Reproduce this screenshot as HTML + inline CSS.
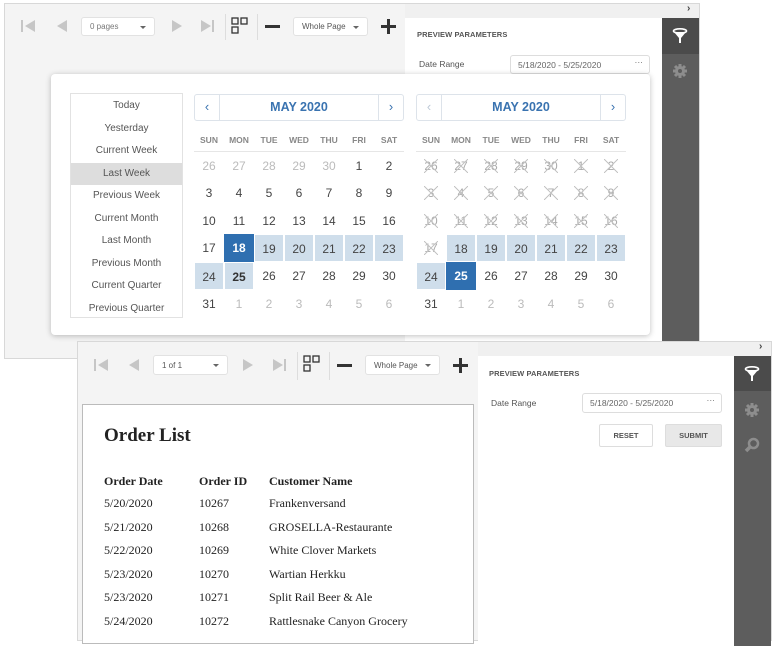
<!DOCTYPE html><html><head><style>
*{box-sizing:border-box;margin:0;padding:0}
body{width:775px;height:638px;background:#fff;position:relative;overflow:hidden;font-family:"Liberation Sans",sans-serif;color:#555}
.a{position:absolute}
.win{position:absolute;background:#f4f4f4;border:1px solid #d8d8d8}
.combo{position:absolute;background:#fff;border:1px solid #e2e2e2;border-radius:3px;font-size:8px;color:#777;padding:0 8px;display:flex;align-items:center}
.combo:after{content:"";position:absolute;right:8px;top:50%;margin-top:-1px;border:3px solid transparent;border-top:3px solid #666;border-bottom:0}
.ttl{font-size:7.5px;font-weight:bold;color:#555;letter-spacing:.1px}
.cal{position:absolute;width:210px}
.hdr{position:absolute;left:0;top:0;width:210px;height:27px;border:1px solid #dde3ea;border-radius:3px}
.hdr .m{position:absolute;left:24px;right:24px;top:0;bottom:0;border-left:1px solid #dde3ea;border-right:1px solid #dde3ea;text-align:center;line-height:25px;font-weight:bold;color:#3a73b0;font-size:12.5px}
.hdr .p,.hdr .n{position:absolute;top:0;width:24px;text-align:center;line-height:24px;font-size:13px;color:#3a73b0}
.hdr .n{right:0}.hdr .p{left:0}
.dow{position:absolute;top:41px;left:0;width:210px;display:flex;font-size:8.5px;color:#888;font-weight:bold;border-bottom:1px solid #e6e6e6;height:17px}
.dow span,.row span{width:30px;text-align:center}
.row{position:absolute;left:0;width:210px;display:flex;font-size:12px;color:#444;height:28px;line-height:28px}
.row span{position:relative}
.g{color:#bbb}
.h{background:#cfdeeb;border:1px solid #fff}
.s{background:#2f6fb0;color:#fff;font-weight:bold}
.x{color:#aaa}
.x:after{content:"";position:absolute;left:8px;top:7px;width:14px;height:14px;background:linear-gradient(45deg,transparent 47%,#c4c4c4 47%,#c4c4c4 53%,transparent 53%),linear-gradient(-45deg,transparent 47%,#c4c4c4 47%,#c4c4c4 53%,transparent 53%)}
.serif{font-family:"Liberation Serif",serif;color:#222}
.side{position:absolute;background:#5d5d5d}
</style></head><body>

<!-- window 1 -->
<div class="win" style="left:4px;top:3px;width:696px;height:356px"></div>
<div class="a" style="left:405px;top:4px;width:294px;height:14px;background:#f0f0f0"></div>
<div class="a" style="left:687px;top:3px;font-size:10px;color:#444;font-weight:bold">›</div>
<div class="a" style="left:405px;top:18px;width:257px;height:340px;background:#fff"></div>
<div class="side" style="left:662px;top:18px;width:37px;height:324px"></div>
<div class="a" style="left:662px;top:18px;width:37px;height:36px;background:#4b4b4b"></div>
<svg class="a" style="left:672px;top:28px" width="16" height="16" viewBox="0 0 16 16"><ellipse cx="8" cy="3" rx="6.5" ry="2.2" fill="none" stroke="#fff" stroke-width="1.6"/><path d="M2 4 L7 10 V15 H9 V10 L14 4 Z" fill="#fff"/></svg>
<svg class="a" style="left:672px;top:63px" width="16" height="16" viewBox="0 0 16 16"><circle cx="8" cy="8" r="5" fill="#8d8d8d"/><g stroke="#8d8d8d" stroke-width="3"><path d="M8 1v14M1 8h14M3 3l10 10M13 3L3 13"/></g><circle cx="8" cy="8" r="2" fill="#5d5d5d"/></svg>
<div class="a ttl" style="left:417px;top:30px">PREVIEW PARAMETERS</div>
<div class="a" style="left:419px;top:59px;font-size:8.5px;color:#555">Date Range</div>
<div class="a" style="left:510px;top:55px;width:140px;height:19px;border:1px solid #ddd;border-radius:3px;font-size:8.5px;color:#666;padding:4px 7px">5/18/2020 - 5/25/2020<span style="position:absolute;right:6px;top:1px">···</span></div>

<!-- toolbar 1 -->
<svg class="a" style="left:20px;top:19px" width="200" height="16"><g fill="#c6c6c6"><rect x="1" y="1" width="2" height="12"/><path d="M15 1 L5 7 L15 13Z"/><path d="M47 1 L37 7 L47 13Z"/><path d="M152 1 L162 7 L152 13Z"/><path d="M181 1 L191 7 L181 13Z"/><rect x="192" y="1" width="2" height="12"/></g></svg>
<div class="combo" style="left:81px;top:17px;width:74px;height:19px">0 pages</div>
<div class="a" style="left:225px;top:14px;width:1px;height:26px;background:#ddd"></div>
<svg class="a" style="left:231px;top:17px" width="18" height="18"><g fill="none" stroke="#333" stroke-width="1.3"><rect x="1" y="1" width="6" height="6"/><rect x="10" y="1" width="6" height="6"/><rect x="1" y="10" width="6" height="6"/></g></svg>
<div class="a" style="left:257px;top:14px;width:1px;height:26px;background:#ddd"></div>
<div class="a" style="left:265px;top:25px;width:15px;height:3px;background:#333"></div>
<div class="combo" style="left:293px;top:17px;width:75px;height:19px;color:#555">Whole Page</div>
<div class="a" style="left:381px;top:25px;width:15px;height:3px;background:#333"></div>
<div class="a" style="left:387px;top:19px;width:3px;height:15px;background:#333"></div>

<!-- popup -->
<div class="a" style="left:51px;top:74px;width:599px;height:261px;background:#fff;border-radius:4px;box-shadow:0 1px 6px rgba(0,0,0,.25)"></div>
<div class="a" style="left:70px;top:93px;width:113px;height:225px;border:1px solid #e2e2e2;font-size:10px;color:#555;text-align:center;line-height:22.5px;padding-top:1px">
<div>Today</div><div>Yesterday</div><div>Current Week</div><div style="background:#ddd">Last Week</div><div>Previous Week</div><div>Current Month</div><div>Last Month</div><div>Previous Month</div><div>Current Quarter</div><div>Previous Quarter</div></div>

<div class="cal" style="left:194px;top:94px">
<div class="hdr"><div class="p">‹</div><div class="m">MAY 2020</div><div class="n">›</div></div>
<div class="dow"><span>SUN</span><span>MON</span><span>TUE</span><span>WED</span><span>THU</span><span>FRI</span><span>SAT</span></div>
<div class="row" style="top:58px"><span class="g">26</span><span class="g">27</span><span class="g">28</span><span class="g">29</span><span class="g">30</span><span>1</span><span>2</span></div>
<div class="row" style="top:85px"><span>3</span><span>4</span><span>5</span><span>6</span><span>7</span><span>8</span><span>9</span></div>
<div class="row" style="top:113px"><span>10</span><span>11</span><span>12</span><span>13</span><span>14</span><span>15</span><span>16</span></div>
<div class="row" style="top:140px"><span>17</span><span class="s">18</span><span class="h">19</span><span class="h">20</span><span class="h">21</span><span class="h">22</span><span class="h">23</span></div>
<div class="row" style="top:168px"><span class="h">24</span><span class="h" style="font-weight:bold;color:#333">25</span><span>26</span><span>27</span><span>28</span><span>29</span><span>30</span></div>
<div class="row" style="top:196px"><span>31</span><span class="g">1</span><span class="g">2</span><span class="g">3</span><span class="g">4</span><span class="g">5</span><span class="g">6</span></div>
</div>

<div class="cal" style="left:416px;top:94px">
<div class="hdr"><div class="p" style="color:#bcc8d6">‹</div><div class="m">MAY 2020</div><div class="n">›</div></div>
<div class="dow"><span>SUN</span><span>MON</span><span>TUE</span><span>WED</span><span>THU</span><span>FRI</span><span>SAT</span></div>
<div class="row" style="top:58px"><span class="x">26</span><span class="x">27</span><span class="x">28</span><span class="x">29</span><span class="x">30</span><span class="x">1</span><span class="x">2</span></div>
<div class="row" style="top:85px"><span class="x">3</span><span class="x">4</span><span class="x">5</span><span class="x">6</span><span class="x">7</span><span class="x">8</span><span class="x">9</span></div>
<div class="row" style="top:113px"><span class="x">10</span><span class="x">11</span><span class="x">12</span><span class="x">13</span><span class="x">14</span><span class="x">15</span><span class="x">16</span></div>
<div class="row" style="top:140px"><span class="x">17</span><span class="h">18</span><span class="h">19</span><span class="h">20</span><span class="h">21</span><span class="h">22</span><span class="h">23</span></div>
<div class="row" style="top:168px"><span class="h">24</span><span class="s">25</span><span>26</span><span>27</span><span>28</span><span>29</span><span>30</span></div>
<div class="row" style="top:196px"><span>31</span><span class="g">1</span><span class="g">2</span><span class="g">3</span><span class="g">4</span><span class="g">5</span><span class="g">6</span></div>
</div>

<!-- window 2 -->
<div class="win" style="left:77px;top:341px;width:695px;height:300px"></div>
<div class="a" style="left:478px;top:342px;width:293px;height:14px;background:#f0f0f0"></div>
<div class="a" style="left:759px;top:341px;font-size:10px;color:#444;font-weight:bold">›</div>
<div class="a" style="left:478px;top:356px;width:256px;height:290px;background:#fff"></div>
<div class="side" style="left:734px;top:356px;width:37px;height:290px"></div>
<div class="a" style="left:734px;top:356px;width:37px;height:35px;background:#4b4b4b"></div>
<svg class="a" style="left:744px;top:366px" width="16" height="16" viewBox="0 0 16 16"><ellipse cx="8" cy="3" rx="6.5" ry="2.2" fill="none" stroke="#fff" stroke-width="1.6"/><path d="M2 4 L7 10 V15 H9 V10 L14 4 Z" fill="#fff"/></svg>
<svg class="a" style="left:744px;top:402px" width="16" height="16" viewBox="0 0 16 16"><circle cx="8" cy="8" r="5" fill="#8d8d8d"/><g stroke="#8d8d8d" stroke-width="3"><path d="M8 1v14M1 8h14M3 3l10 10M13 3L3 13"/></g><circle cx="8" cy="8" r="2" fill="#5d5d5d"/></svg>
<svg class="a" style="left:744px;top:437px" width="16" height="16" viewBox="0 0 16 16"><circle cx="9.5" cy="6.5" r="4.5" fill="none" stroke="#8d8d8d" stroke-width="2.5"/><path d="M6.5 9.5 L2 14" stroke="#8d8d8d" stroke-width="3.5"/></svg>
<div class="a ttl" style="left:489px;top:369px">PREVIEW PARAMETERS</div>
<div class="a" style="left:491px;top:398px;font-size:8.5px;color:#555">Date Range</div>
<div class="a" style="left:582px;top:393px;width:140px;height:20px;border:1px solid #ddd;border-radius:3px;font-size:8.5px;color:#666;padding:4px 7px">5/18/2020 - 5/25/2020<span style="position:absolute;right:6px;top:1px">···</span></div>
<div class="a" style="left:599px;top:424px;width:54px;height:23px;border:1px solid #ddd;border-radius:2px;font-size:7.5px;font-weight:bold;color:#555;text-align:center;line-height:21px">RESET</div>
<div class="a" style="left:665px;top:424px;width:57px;height:23px;background:#e8e8e8;border:1px solid #ddd;border-radius:2px;font-size:7.5px;font-weight:bold;color:#555;text-align:center;line-height:21px">SUBMIT</div>

<svg class="a" style="left:93px;top:358px" width="200" height="16"><g fill="#c6c6c6"><rect x="1" y="1" width="2" height="12"/><path d="M15 1 L5 7 L15 13Z"/><path d="M46 1 L36 7 L46 13Z"/><path d="M150 1 L160 7 L150 13Z"/><path d="M180 1 L190 7 L180 13Z"/><rect x="191" y="1" width="2" height="12"/></g></svg>
<div class="combo" style="left:153px;top:355px;width:75px;height:20px;color:#555">1 of 1</div>
<div class="a" style="left:297px;top:352px;width:1px;height:28px;background:#ddd"></div>
<svg class="a" style="left:303px;top:355px" width="18" height="18"><g fill="none" stroke="#333" stroke-width="1.3"><rect x="1" y="1" width="6" height="6"/><rect x="10" y="1" width="6" height="6"/><rect x="1" y="10" width="6" height="6"/></g></svg>
<div class="a" style="left:329px;top:352px;width:1px;height:28px;background:#ddd"></div>
<div class="a" style="left:337px;top:364px;width:15px;height:3px;background:#333"></div>
<div class="combo" style="left:365px;top:355px;width:75px;height:20px;color:#555">Whole Page</div>
<div class="a" style="left:453px;top:364px;width:15px;height:3px;background:#333"></div>
<div class="a" style="left:459px;top:358px;width:3px;height:15px;background:#333"></div>

<div class="a" style="left:82px;top:404px;width:392px;height:240px;background:#fff;border:1px solid #bbb"></div>
<div class="a serif" style="left:104px;top:425px;font-size:19px;font-weight:bold">Order List</div>
<div class="a serif" style="left:104px;top:474px;font-size:12px;line-height:23.6px">
<div style="font-weight:bold;height:18px;line-height:14px">Order Date</div><div>5/20/2020</div><div>5/21/2020</div><div>5/22/2020</div><div>5/23/2020</div><div>5/23/2020</div><div>5/24/2020</div></div>
<div class="a serif" style="left:199px;top:474px;font-size:12px;line-height:23.6px">
<div style="font-weight:bold;height:18px;line-height:14px">Order ID</div><div>10267</div><div>10268</div><div>10269</div><div>10270</div><div>10271</div><div>10272</div></div>
<div class="a serif" style="left:269px;top:474px;font-size:12px;line-height:23.6px">
<div style="font-weight:bold;height:18px;line-height:14px">Customer Name</div><div>Frankenversand</div><div>GROSELLA-Restaurante</div><div>White Clover Markets</div><div>Wartian Herkku</div><div>Split Rail Beer &amp; Ale</div><div>Rattlesnake Canyon Grocery</div></div>
</body></html>
